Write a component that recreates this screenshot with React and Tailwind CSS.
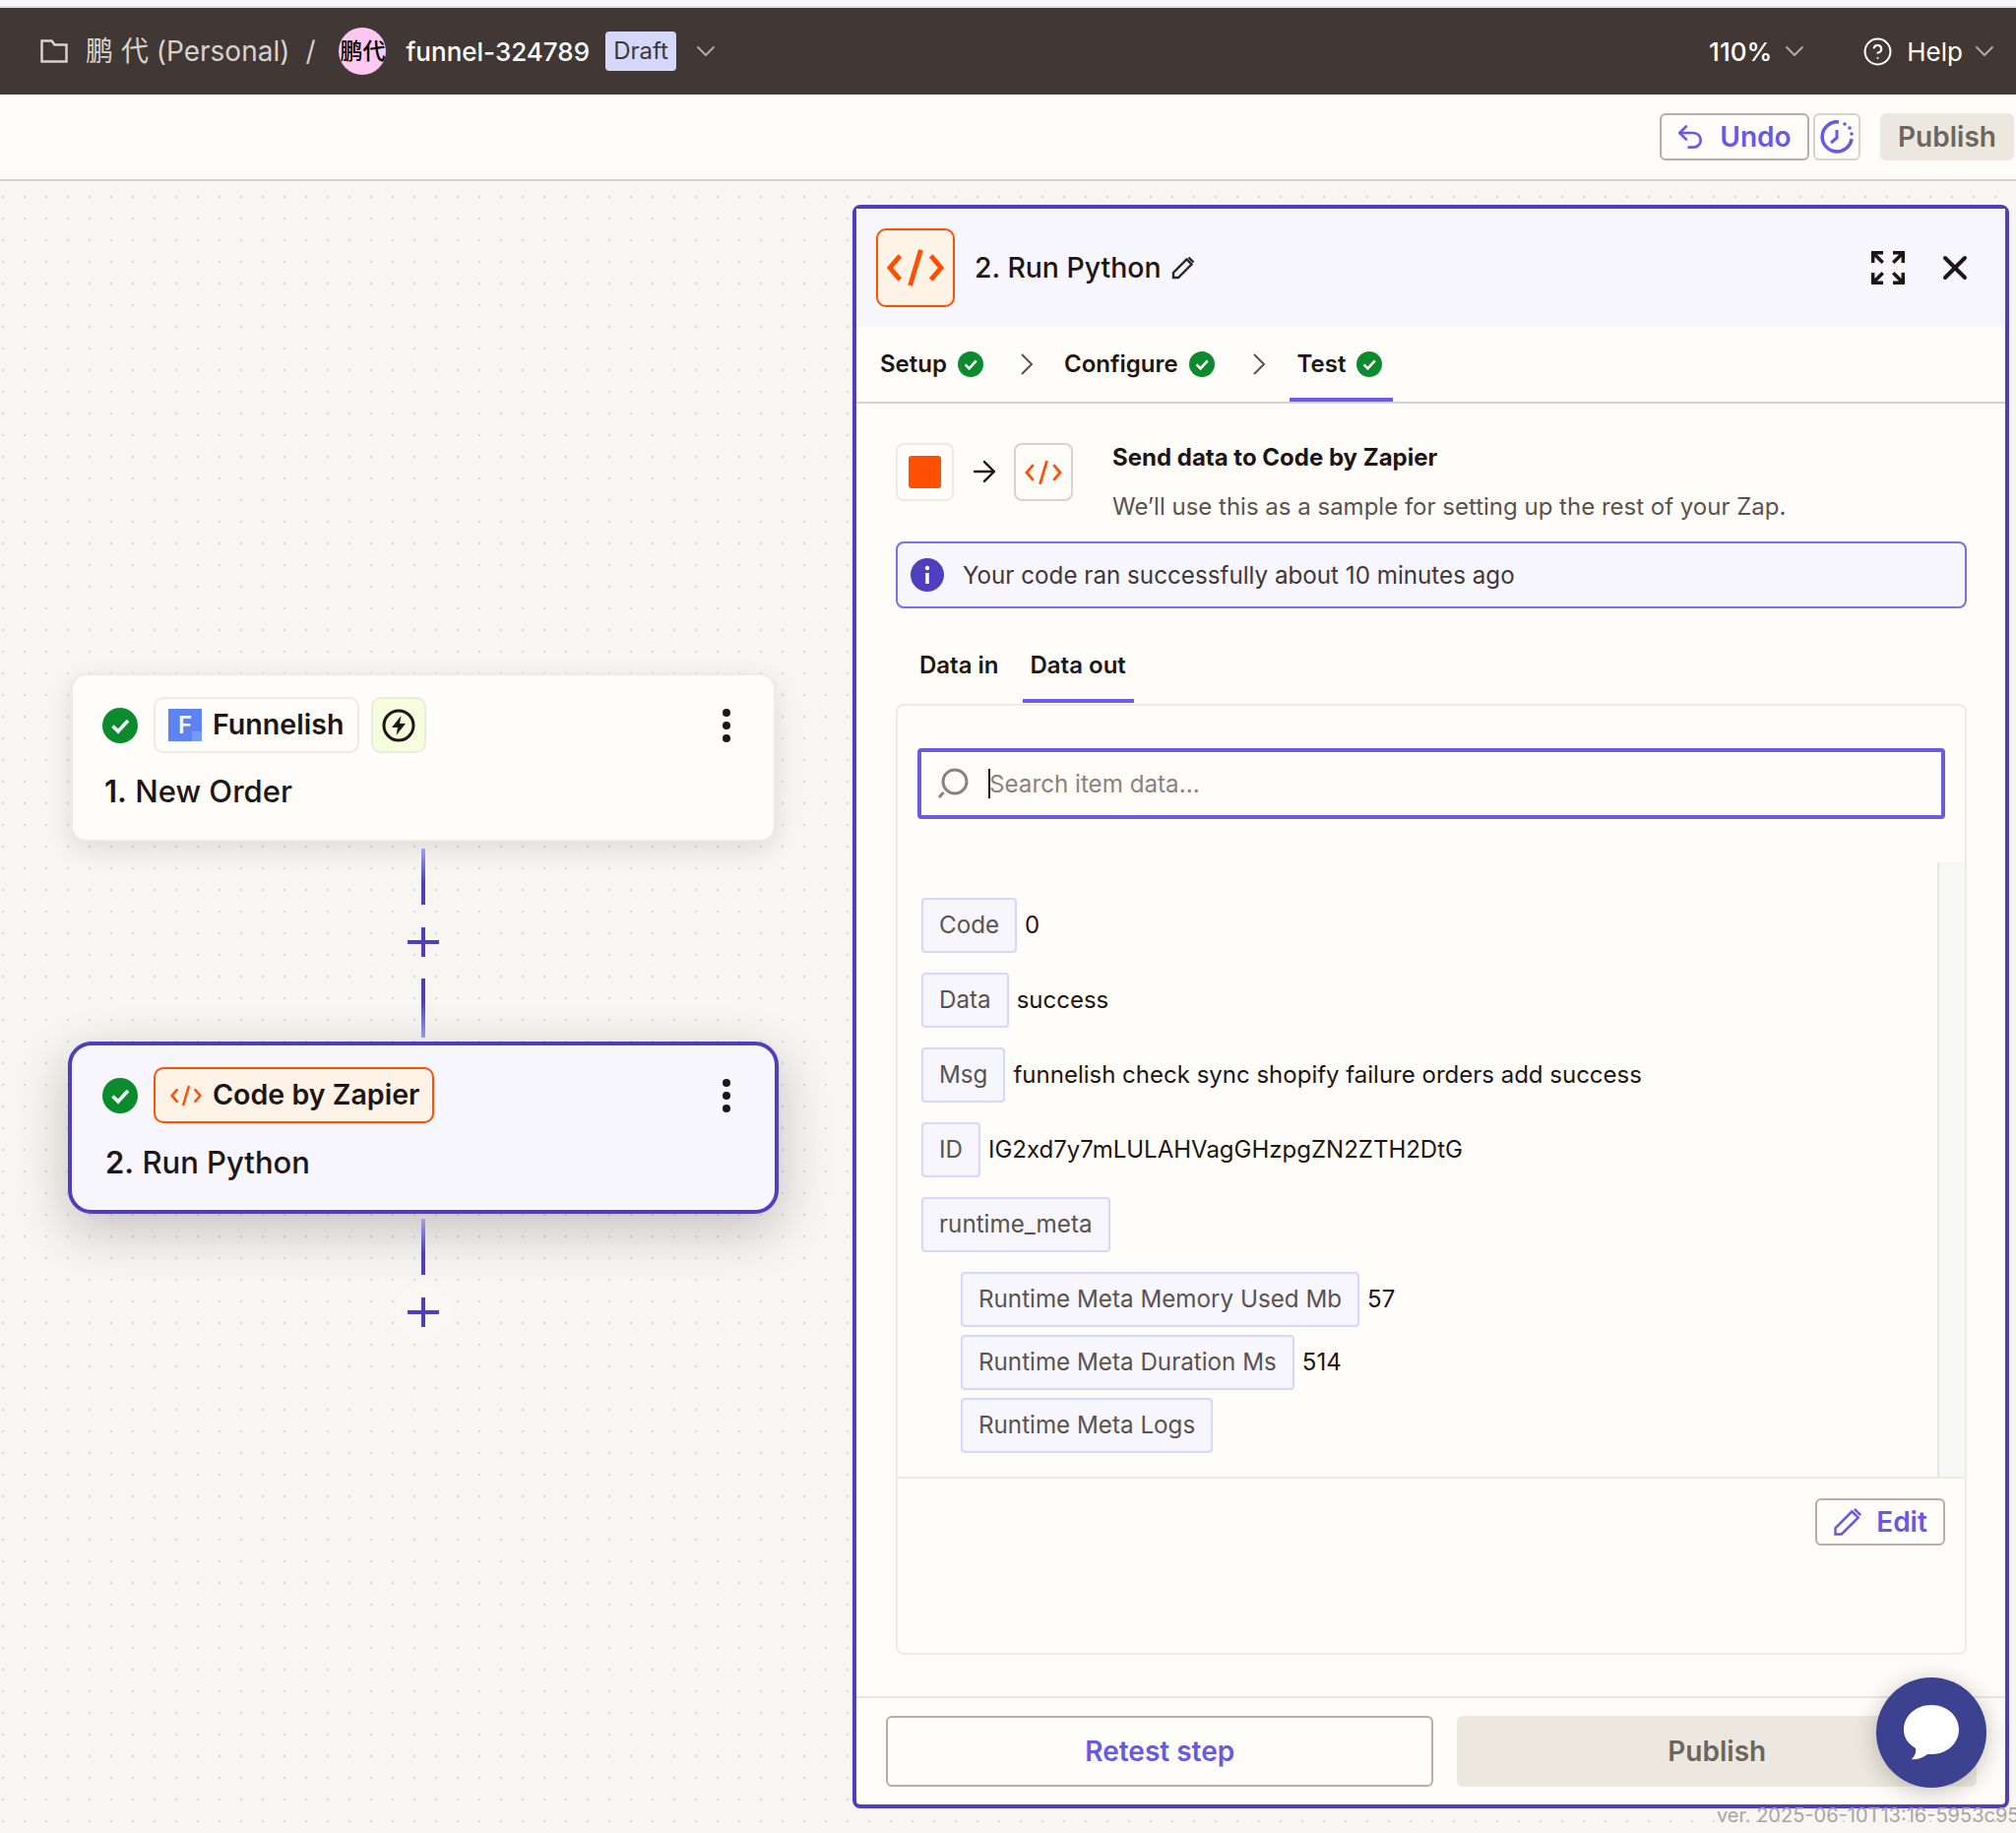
import React from 'react';
import { ChevronDown, CircleHelp, Undo2, ArrowRight, X } from 'lucide-react';

const CodeIcon = ({ className, sw = 3 }) => (
  <svg viewBox="0 0 48 32" fill="none" stroke="#ff4f00" strokeWidth={sw} className={className}>
    <path d="M11 6 2.500 16 11 26M37 6l8.500 10L37 26M28.500 1 19.500 31" />
  </svg>
);

const Check = ({ className }) => (
  <svg viewBox="0 0 36 36" className={className}>
    <circle cx="18" cy="18" r="18" fill="#0c8a2e" />
    <path d="m10.500 18.500 5.500 5.500 10-11" fill="none" stroke="#fff" strokeWidth="3.500" />
  </svg>
);

const Pencil = ({ className, color = '#2d2523', sw = 2.400 }) => (
  <svg viewBox="0 0 24 24" fill="none" stroke={color} strokeWidth={sw} className={className}>
    <path d="M2 22v-5L15.500 3.500l5 5L7 22H2ZM17.500 1.500l5 5" />
  </svg>
);

const Chevron = ({ className }) => (
  <svg viewBox="0 0 14 22" fill="none" stroke="#5b524e" strokeWidth="2" className={className}>
    <path d="m2 1 10 10L2 21" />
  </svg>
);

const Dots = ({ className }) => (
  <div className={`ml-auto flex flex-col gap-[5px] ${className}`}>
    <span className="w-[8px] h-[8px] rounded-full bg-[#201515]" />
    <span className="w-[8px] h-[8px] rounded-full bg-[#201515]" />
    <span className="w-[8px] h-[8px] rounded-full bg-[#201515]" />
  </div>
);

const Connector = ({ last }) => (
  <div className="flex flex-col items-center">
    <div className={`w-[4px] h-[57px] bg-gradient-to-b from-[#a5a0ea] to-[#4f3fbd] to-60% ${last ? 'mt-[5px]' : 'mt-[7px]'}`} />
    <div className="relative w-[32px] h-[30px] mt-[23px]">
      {last && <span className="absolute -left-[13px] -top-[14px] w-[58px] h-[58px] rounded-full bg-[#f9f8f4]" />}
      <span className="absolute left-[14px] top-0 w-[4px] h-[30px] bg-[#4f3fbd]" />
      <span className="absolute left-0 top-[13px] w-[32px] h-[4px] bg-[#4f3fbd]" />
    </div>
    {!last && <div className="w-[4px] h-[60px] mt-[22px] bg-gradient-to-t from-[#a5a0ea] to-[#4f3fbd] to-60%" />}
  </div>
);

const Tag = ({ label, value, nested }) => (
  <div className={`flex items-start ${nested ? 'ml-[40px]' : ''}`}>
    <span className="h-[56px] px-[16px] pt-[1px] flex items-center rounded-[4px] border-2 border-[#d5d7fb] bg-[#f7f6fd] text-[24.2px] text-[#5b524e]">
      {label}
    </span>
    {value && <span className="ml-[8px] mt-[11px] text-[24px] leading-[34px] text-[#201515]">{value}</span>}
  </div>
);

const Step = ({ label }) => (
  <div className="flex items-center gap-[11px]">
    <span className="text-[24px] font-semibold text-[#201515]">{label}</span>
    <Check className="w-[26px] h-[26px]" />
  </div>
);

export default function App() {
  return (
    <div className="relative w-[2048px] h-[1862px] overflow-hidden flex flex-col bg-[#f7f6f3] font-['Inter','Noto_Sans_CJK_SC',sans-serif]">
      <div className="h-[8px] shrink-0 bg-[#f8f8ff] border-b-2 border-[#e0e0ea]" />

      <header className="h-[88px] shrink-0 bg-[#413735] flex items-center pl-[41px] pr-[16px]">
        <svg viewBox="0 0 28 24" fill="none" stroke="#d7d3cc" strokeWidth="2.500" className="w-[28px] h-[24px]">
          <path d="M1.500 22.500V1.500h10l3 4h12v17z" />
        </svg>
        <span className="ml-[18px] text-[28px] text-[#d7d3cc]">鹏 代 (Personal)</span>
        <span className="ml-[16px] text-[28px] text-[#d7d3cc]">/</span>
        <span className="ml-[24px] w-[48px] h-[48px] rounded-full bg-[#fcc7f0] flex items-center justify-center text-[23px] font-medium text-black whitespace-nowrap">鹏代</span>
        <span className="ml-[20px] text-[26px] font-medium text-white">funnel-324789</span>
        <span className="ml-[16px] w-[72px] h-[40px] rounded-[4px] bg-[#d5d7fb] flex items-center justify-center text-[24px] text-[#413735]">Draft</span>
        <ChevronDown className="ml-[14px] w-[32px] h-[32px] text-[#b5aea4]" strokeWidth={1.400} />
        <span className="ml-auto text-[26px] font-medium text-white">110%</span>
        <ChevronDown className="ml-[7px] w-[32px] h-[32px] text-[#b5aea4]" strokeWidth={1.400} />
        <CircleHelp className="ml-[53px] w-[31px] h-[31px] text-white" strokeWidth={1.600} />
        <span className="ml-[14px] text-[26px] text-white">Help</span>
        <ChevronDown className="ml-[6px] w-[32px] h-[32px] text-[#b5aea4]" strokeWidth={1.400} />
      </header>

      <div className="h-[88px] shrink-0 bg-[#fffdf9] border-b-2 border-[#d7d3cc] flex items-center justify-end pr-[2px]">
        <button className="w-[152px] h-[48px] pr-[3px] rounded-[6px] border-2 border-[#b5aea4] flex items-center justify-center gap-[14px] text-[#6659e6] text-[28px] font-semibold">
          <Undo2 className="w-[32px] h-[32px]" strokeWidth={2} />
          Undo
        </button>
        <button className="ml-[4px] w-[48px] h-[48px] rounded-[6px] border-2 border-[#d7d3cc] flex items-center justify-center">
          <svg viewBox="0 0 36 36" fill="none" stroke="#6659e6" strokeWidth="3.500" className="w-[36px] h-[36px]">
            <path d="M20 3A15 15 0 1 0 33 20" />
            <path d="M18 11v8l-6 5" strokeWidth="3" />
            <circle cx="26" cy="5" r="1.800" fill="#6659e6" stroke="none" />
            <circle cx="31" cy="9" r="1.800" fill="#6659e6" stroke="none" />
            <circle cx="33" cy="15" r="1.800" fill="#6659e6" stroke="none" />
          </svg>
        </button>
        <button className="ml-[20px] w-[136px] h-[48px] rounded-[6px] bg-[#ece8df] text-[#6d6660] text-[28px] font-semibold">Publish</button>
      </div>

      <main className="flex-1 flex bg-[radial-gradient(#d9d6cf_1.5px,transparent_1.5px)] bg-[size:22px_22px] bg-[position:-8px_5px]">
        <section className="w-[866px] shrink-0 pl-[69px] pt-[500px]">
          <div className="w-[722px] flex flex-col items-center">
            <div className="w-[716px] h-[171px] rounded-[16px] border-2 border-[#efebe3] bg-[#fffdf9] shadow-[0_8px_26px_rgba(32,21,21,0.11)]">
              <div className="flex items-center pl-[30px] pt-[22px]">
                <Check className="w-[36px] h-[36px]" />
                <div className="ml-[16px] w-[209px] h-[57px] rounded-[10px] border-2 border-[#efebe3] flex items-center pl-[13px]">
                  <span className="relative w-[34px] h-[33px] bg-[#5f82f3] flex items-center justify-center text-white text-[24px] font-semibold">
                    <span className="absolute right-0 bottom-0 w-[10px] h-[10px] bg-[#7a9af5]" />
                    <span className="relative">F</span>
                  </span>
                  <span className="ml-[11px] text-[28.6px] font-semibold text-[#201515]">Funnelish</span>
                </div>
                <div className="ml-[12px] w-[56px] h-[57px] rounded-[10px] border-2 border-[#ebe9e4] bg-[#f5ffdd] flex items-center justify-center">
                  <svg viewBox="0 0 34 34" className="w-[34px] h-[34px]">
                    <circle cx="17" cy="17" r="15" fill="none" stroke="#201515" strokeWidth="3" />
                    <path d="M19.500 7 10 19h6l-1.500 8L24 15h-6z" fill="#201515" />
                  </svg>
                </div>
                <Dots className="mr-[44px]" />
              </div>
              <p className="ml-[32px] mt-[16px] text-[31px] font-medium text-[#201515]"><span className="font-semibold">1.</span> New Order</p>
            </div>
            <Connector />
            <div className="w-[722px] h-[175px] mt-[4px] rounded-[24px] border-4 border-[#4f3fbd] bg-[#f7f6fd] shadow-[0_16px_52px_rgba(32,21,21,0.24)]">
              <div className="flex items-center pl-[31px] pt-[22px]">
                <Check className="w-[36px] h-[36px]" />
                <div className="ml-[16px] w-[285px] h-[57px] rounded-[10px] border-2 border-[#ff4f00] bg-[#fff3e8] flex items-center pl-[15px]">
                  <CodeIcon className="w-[32px] h-[24px]" sw={3.800} />
                  <span className="ml-[11px] text-[28.6px] font-semibold text-[#201515] whitespace-nowrap">Code by Zapier</span>
                </div>
                <Dots className="mr-[45px]" />
              </div>
              <p className="ml-[34px] mt-[17px] text-[31px] font-medium text-[#201515]"><span className="font-semibold">2.</span> Run Python</p>
            </div>
            <Connector last />
          </div>
        </section>

        <aside className="relative w-[1175px] h-[1629px] mt-[24px] rounded-[8px] border-4 border-[#4f3fbd] bg-[#fffdf9] flex flex-col">
          <div className="h-[120px] shrink-0 bg-[#f7f6fd] flex items-center pl-[20px]">
            <div className="w-[80px] h-[80px] rounded-[10px] border-2 border-[#ff4f00] bg-[#fff3e8] flex items-center justify-center">
              <CodeIcon className="w-[58px] h-[40px]" sw={4} />
            </div>
            <span className="ml-[20px] text-[28.4px] font-medium text-[#201515]">2. Run Python</span>
            <Pencil className="ml-[10px] w-[24px] h-[24px]" />
            <svg viewBox="0 0 34 34" fill="none" stroke="#201515" strokeWidth="3.500" className="ml-auto w-[34px] h-[34px]">
              <path d="M12 1.700H1.700V12M1.700 1.700l10 10M22 1.700h10.300V12M32.300 1.700l-10 10M12 32.300H1.700V22M1.700 32.300l10-10M22 32.300h10.300V22M32.300 32.300l-10-10" />
            </svg>
            <X className="ml-[31px] mr-[31px] w-[40px] h-[40px] text-[#201515]" strokeWidth={2.400} />
          </div>

          <div className="h-[78px] shrink-0 border-b-2 border-[#d7d3cc] flex items-center pl-[24px] pb-[1px] relative">
            <Step label="Setup" />
            <Chevron className="ml-[37px] w-[14px] h-[22px]" />
            <div className="ml-[31px]"><Step label="Configure" /></div>
            <Chevron className="ml-[38px] w-[14px] h-[22px]" />
            <div className="ml-[32px]"><Step label="Test" /></div>
            <span className="absolute left-[440px] bottom-0 w-[105px] h-[4px] bg-[#6a5ce6]" />
          </div>

          <div className="flex items-start pl-[40px] pr-[40px] pt-[40px]">
            <div className="w-[59px] h-[59px] rounded-[8px] border-2 border-[#efebe3] flex items-center justify-center">
              <span className="w-[33px] h-[33px] rounded-[3px] bg-[#ff4f00]" />
            </div>
            <ArrowRight className="ml-[14px] mt-[12px] w-[34px] h-[34px] text-[#201515]" strokeWidth={1.700} />
            <div className="ml-[13px] w-[60px] h-[59px] rounded-[8px] border-2 border-[#d7d3cc] flex items-center justify-center">
              <CodeIcon className="w-[38px] h-[28px]" sw={3.500} />
            </div>
            <div className="ml-[40px]">
              <p className="text-[24px] font-bold text-[#201515] leading-[30px]">Send data to Code by Zapier</p>
              <p className="mt-[20px] text-[24px] text-[#5b524e] leading-[30px]">We’ll use this as a sample for setting up the rest of your Zap.</p>
            </div>
          </div>

          <div className="ml-[40px] mr-[39px] mt-[20px] h-[68px] shrink-0 rounded-[8px] border-2 border-[#7a6ff0] bg-[#f7f6fd] flex items-center pl-[13px]">
            <svg viewBox="0 0 34 34" className="w-[34px] h-[34px]">
              <circle cx="17" cy="17" r="17" fill="#4f3fbd" />
              <circle cx="17" cy="10" r="2.200" fill="#fff" />
              <path d="M17 15v11" stroke="#fff" strokeWidth="3.500" />
            </svg>
            <span className="ml-[19px] pt-[2px] text-[24.2px] text-[#413735]">Your code ran successfully about 10 minutes ago</span>
          </div>

          <div className="mx-[40px] h-[96px] flex text-[24px] font-semibold text-[#201515] shrink-0">
            <span className="pt-[40px] ml-[24px]">Data in</span>
            <span className="pt-[40px] ml-[24px] px-[8px] border-b-4 border-[#6a5ce6]">Data out</span>
          </div>

          <div className="ml-[40px] mr-[39px] mt-[1px] h-[966px] shrink-0 rounded-[8px] border-2 border-[#efebe3] flex flex-col">
            <div className="mx-[20px] mt-[43px] h-[72px] shrink-0 rounded-[4px] border-4 border-[#6a5ce6] flex items-center pl-[16px]">
              <svg viewBox="0 0 32 32" fill="none" stroke="#8a827c" strokeWidth="3" className="w-[32px] h-[32px]">
                <circle cx="18" cy="14" r="12" />
                <path d="M6.500 25 2 30" />
              </svg>
              <span className="ml-[20px] w-[2px] h-[30px] bg-[#201515]" />
              <span className="-ml-[1px] pt-[2px] text-[24.2px] leading-[30px] text-[#8a827c]">Search item data...</span>
            </div>

            <div className="relative mt-[44px] h-[626px] shrink-0 border-b-2 border-[#efebe3]">
              <div className="pl-[24px] pt-[36px] flex flex-col gap-[20px]">
                <Tag label="Code" value="0" />
                <Tag label="Data" value="success" />
                <Tag label="Msg" value="funnelish check sync shopify failure orders add success" />
                <Tag label="ID" value="IG2xd7y7mLULAHVagGHzpgZN2ZTH2DtG" />
                <Tag label="runtime_meta" />
                <div className="flex flex-col gap-[8px]">
                  <Tag nested label="Runtime Meta Memory Used Mb" value="57" />
                  <Tag nested label="Runtime Meta Duration Ms" value="514" />
                  <Tag nested label="Runtime Meta Logs" />
                </div>
              </div>
              <div className="absolute right-0 top-0 bottom-0 w-[28px] border-l-2 border-[#e8e6e0] bg-[#f8f8f6]" />
            </div>

            <div className="flex justify-end pr-[20px] pt-[20px]">
              <button className="w-[132px] h-[48px] rounded-[6px] border-2 border-[#b5aea4] flex items-center justify-center gap-[14px] text-[#6659e6] text-[28px] font-semibold">
                <Pencil className="w-[30px] h-[30px]" color="#6659e6" sw={2} />
                Edit
              </button>
            </div>
          </div>

          <div className="mt-auto h-[110px] shrink-0 border-t-2 border-[#e8e6e0] flex items-start gap-[24px] pl-[30px] pr-[29px] pt-[18px]">
            <button className="w-[557px] h-[72px] rounded-[6px] border-2 border-[#b5aea4] text-[#6659e6] text-[28px] font-semibold">Retest step</button>
            <button className="w-[528px] h-[72px] rounded-[6px] bg-[#ece8df] text-[#6d6660] text-[28px] font-semibold">Publish</button>
          </div>
        </aside>
      </main>

      <span className="absolute left-[1744px] top-[1830px] text-[20px] leading-[28px] text-[#aaa5a0] whitespace-nowrap">ver. 2025-06-10T13:16-5953c95</span>

      <div className="absolute left-[1906px] top-[1704px] w-[112px] h-[112px] rounded-full bg-[#3c4290] flex items-center justify-center shadow-[0_4px_24px_rgba(32,21,21,0.25)]">
        <svg viewBox="0 0 58 58" className="w-[58px] h-[58px]">
          <path d="M29 1c16 0 28 11 28 25S45 51 29 51h-4c-4 3-10 6-16 5 3-3 5-7 4-11C5 40 1 34 1 26 1 12 13 1 29 1Z" fill="#fff" />
        </svg>
      </div>
    </div>
  );
}
